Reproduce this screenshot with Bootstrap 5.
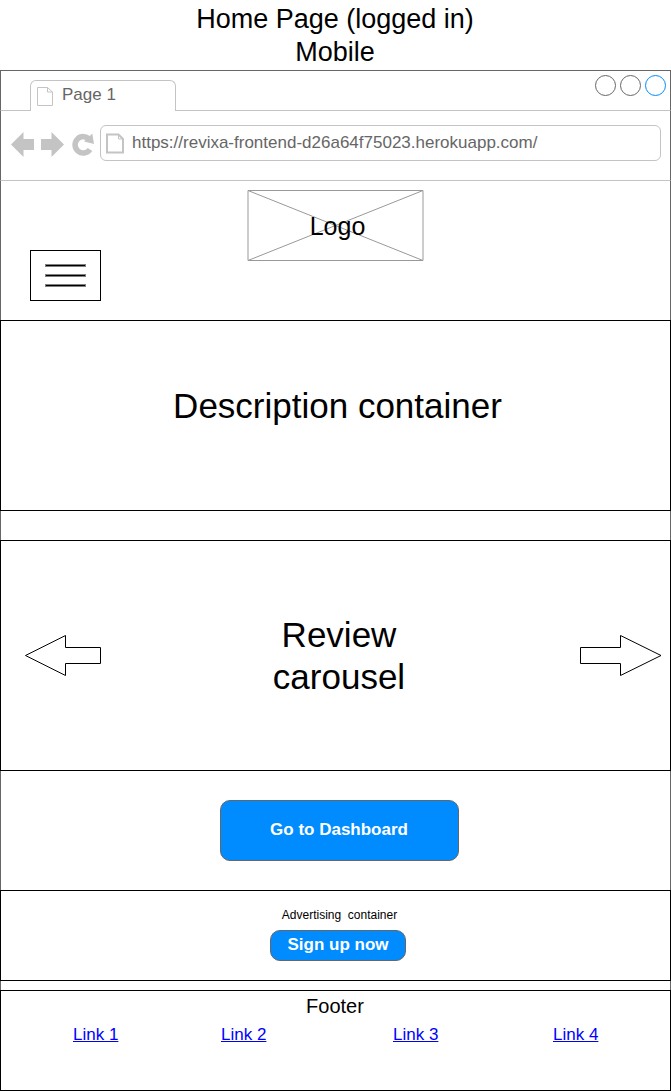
<!DOCTYPE html>
<html lang="en">
<head>
<meta charset="utf-8">
<meta name="viewport" content="width=device-width, initial-scale=1">
<title>Home Page (logged in) Mobile</title>
<link href="https://cdn.jsdelivr.net/npm/bootstrap@5.3.0/dist/css/bootstrap.min.css" rel="stylesheet">
<style>
body{font-family:"Liberation Sans",Arial,sans-serif;color:#000;background:#fff;line-height:1.2;overflow:hidden}
svg{display:block;flex:none}
.page-title{height:70px;font-size:27px;line-height:33px;padding:3px 1px 0 0;margin:0;font-weight:400}
.chrome{border:0 solid #666;border-width:0 1px}
.tab-strip{height:41px;border-top:1px solid #666;border-bottom:1px solid #c4c4c4;padding:0 4px 0 29px}
.page-tab{width:146px;height:31px;margin-bottom:-1px;border:1px solid #c4c4c4;border-bottom:0;border-radius:6px 6px 0 0;background:#fff;color:#666;font-size:17px;line-height:20px;padding:4px 0 0 6px;gap:8px}
.page-tab svg{margin-top:2px}
.dots{gap:3px;padding-top:3px}
.toolbar{height:70px;border-bottom:1px solid #c4c4c4;padding:14px 9px 0 10px}
.address{width:561px;height:36px;border:1px solid #c4c4c4;border-radius:6px;color:#666;font-size:17px;line-height:20px;padding:7px 0 0 5px;gap:7px}
.site-head{height:139px;padding:9px 0 0 29px}
.logo{width:177px;height:71px;margin-left:217px;font-size:25px;line-height:30px;padding-top:21px}
.logo svg{left:0;top:0}
.menu-btn{width:71px;height:51px;border:1px solid #000;margin-top:-11px;background:#fff;padding:0 0 0 14px}
.block{border:1px solid #000}
.about{height:191px;font-size:35px;line-height:42px;padding:64px 0 0 4px}
.reviews{height:231px;font-size:35px;line-height:42px;padding:0 8px 0 24px}
.reviews-title{width:180px;padding-right:4px}
.gap-lg{height:29px}.gap-sm{height:9px}
.cta{height:119px;padding:29px 0 0 8px}
.blue{background:#008cff;border:1px solid #666;color:#fff;font-weight:700;font-size:17px;line-height:20px;padding:0;border-radius:10px}
.go{width:239px;height:61px;padding:0 1px 1px 0}
.advert{height:91px;font-size:12px;line-height:14px;padding:17px 0 0 0}
.advert p{white-space:pre;margin:0 0 8px 8px}
.join{width:136px;height:31px;padding-bottom:1px;margin-left:5px}
.foot{height:101px;padding-top:3px}
.foot-title{font-size:20px;line-height:24px;padding-right:1px}
.links{padding:7px 0 0 72px;font-size:17px;line-height:20px}
.links a{color:#00f}
.links a:nth-child(1){width:148px}.links a:nth-child(2){width:172px}.links a:nth-child(3){width:160px}
</style>
<script src="https://cdn.jsdelivr.net/npm/bootstrap@5.3.0/dist/js/bootstrap.bundle.min.js"></script>
</head>
<body>
<h1 class="page-title text-center">Home Page (logged in)<br>Mobile</h1>

<div class="chrome tab-strip d-flex align-items-end justify-content-between">
  <div class="page-tab d-flex">
    <svg width="17" height="20" viewBox="0 0 17 20" fill="none" stroke="#c4c4c4"><path d="M.5.5H10.500L15.500 5V18.500H.5ZM10.500.5V5H15.500"/></svg>
    <span>Page 1</span>
  </div>
  <div class="dots d-flex align-self-start">
    <svg width="22" height="22"><circle cx="11.500" cy="11.500" r="10" fill="none" stroke="#666"/></svg>
    <svg width="22" height="22"><circle cx="11.500" cy="11.500" r="10" fill="none" stroke="#666"/></svg>
    <svg width="22" height="22"><circle cx="11.500" cy="11.500" r="10" fill="none" stroke="#008cff"/></svg>
  </div>
</div>

<div class="chrome toolbar d-flex justify-content-between">
  <svg width="84" height="40" viewBox="11 125 84 40" fill="#c4c4c4">
    <path d="M11 144.500 23.500 132V139H34V150H23.500V157Z"/>
    <path d="M64 144.500 51.500 132V139H41V150H51.500V157Z"/>
    <path d="M89.500 139.500A8.200 8.200 0 1 0 90 149.500" fill="none" stroke="#c4c4c4" stroke-width="5.500"/>
    <path d="M92.300 133.500 94 144 84 141.500Z"/>
  </svg>
  <div class="address d-flex">
    <svg width="19" height="21" viewBox="0 0 19 21" fill="none" stroke="#c4c4c4" stroke-width="2"><path d="M1 1.500H12.500L17 6V19.500H1Z"/><path d="M12.500 1.500V6H17" stroke-width="1"/></svg>
    <span>https://revixa-frontend-d26a64f75023.herokuapp.com/</span>
  </div>
</div>

<header class="chrome site-head">
  <div class="logo position-relative text-center">
    <svg class="position-absolute" width="177" height="71" fill="none" stroke="#999"><path d="M1 .5H176V70.500H1ZM1 .5 176 70.500M1 70.500 176 .5"/></svg>
    <span class="position-relative ps-1">Logo</span>
  </div>
  <button class="menu-btn d-flex align-items-center" aria-label="Menu">
    <svg width="41" height="25" shape-rendering="crispEdges"><path d="M0 1h41v3H0zM0 11h41v3H0zM0 21h41v3H0z" fill="#808080"/><path d="M1 2h39v1H1zM1 12h39v1H1zM1 22h39v1H1z"/></svg>
  </button>
</header>

<section class="block about text-center">Description container</section>
<div class="chrome gap-lg"></div>

<section class="block reviews d-flex align-items-center justify-content-between">
  <svg width="77" height="41" fill="none" stroke="#000"><path d="M.5 20.500 40.500.5V12.500H75.500V28.500H40.500V40.500Z"/></svg>
  <div class="reviews-title text-center">Review carousel</div>
  <svg width="82" height="41" fill="none" stroke="#000"><path d="M81 20.500 40.500.5V12.500H.5V28.500H40.500V40.500Z"/></svg>
</section>

<div class="chrome cta text-center"><button class="btn blue go">Go to Dashboard</button></div>

<section class="block advert text-center">
  <p>Advertising  container</p>
  <button class="btn blue join">Sign up now</button>
</section>
<div class="chrome gap-sm"></div>

<footer class="block foot">
  <div class="foot-title text-center">Footer</div>
  <nav class="links d-flex">
    <a href="#">Link 1</a><a href="#">Link 2</a><a href="#">Link 3</a><a href="#">Link 4</a>
  </nav>
</footer>
</body>
</html>
